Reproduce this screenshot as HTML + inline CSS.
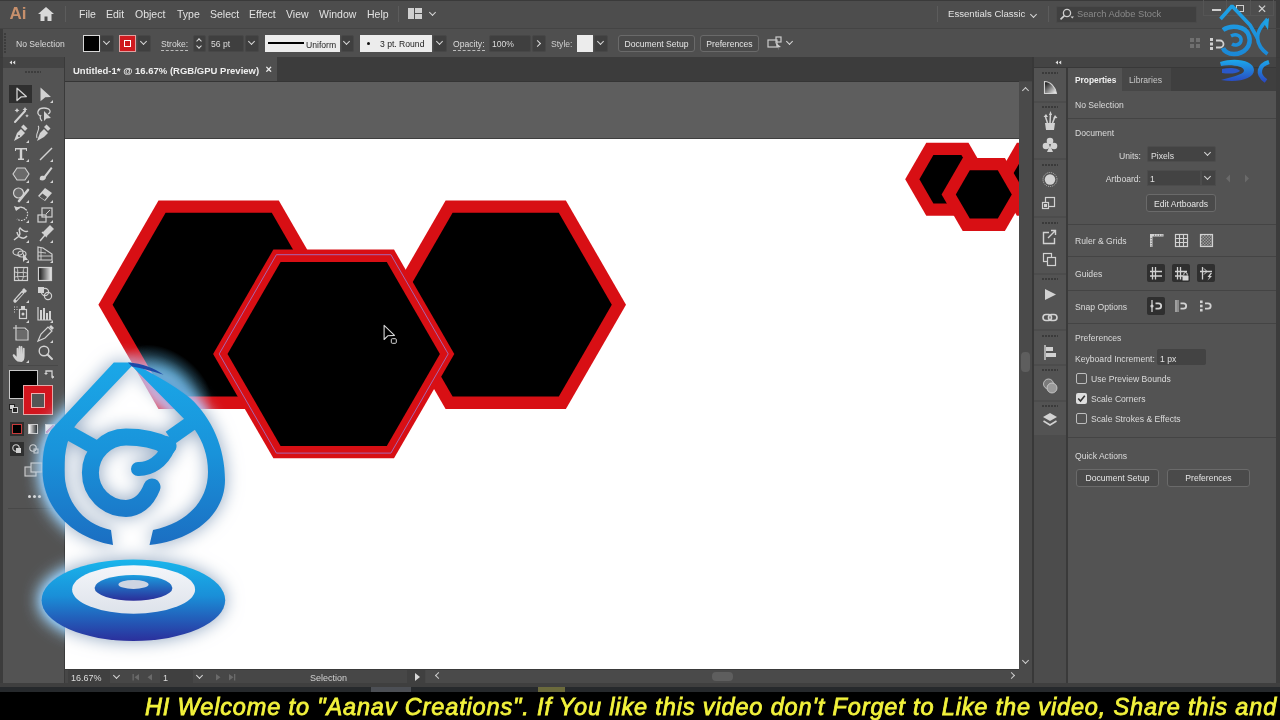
<!DOCTYPE html>
<html><head><meta charset="utf-8">
<style>
*{box-sizing:border-box;margin:0;padding:0}
html,body{width:1280px;height:720px;overflow:hidden}
body{position:relative;background:#454545;font-family:"Liberation Sans",sans-serif;color:#d6d6d6}
.a{position:absolute}
.t{position:absolute;white-space:nowrap;line-height:1}
.mi{position:absolute;top:8px;font-size:10.5px;color:#e2e2e2}
.cb{position:absolute;background:#3f3f3f;border:1px solid #474747;border-radius:2px}
.chev{position:absolute;width:6px;height:6px;border-right:1.5px solid #d8d8d8;border-bottom:1.5px solid #d8d8d8;transform:rotate(45deg)}
.btn{position:absolute;border:1px solid #6a6a6a;border-radius:3px;background:#4a4a4a;font-size:8.6px;color:#e6e6e6;text-align:center}
.pl{position:absolute;font-size:8.6px;color:#dcdcdc;white-space:nowrap;line-height:1;margin-top:0.5px;margin-left:-1px}
.sep{position:absolute;height:1px;background:#444}
</style></head><body>

<!-- MENU BAR -->
<div class="a" style="left:0;top:0;width:1280px;height:28px;background:#4d4d4d"></div>
<div class="a" style="left:0;top:0;width:1280px;height:1px;background:#3a3a3a"></div>
<div class="t" style="left:9.5px;top:5px;font-size:17px;color:#c8906c;font-weight:bold">Ai</div>
<svg class="a" style="left:38px;top:7px" width="16" height="14" viewBox="0 0 16 14"><path d="M8 0 L16 7 L13.5 7 L13.5 14 L9.5 14 L9.5 9.5 L6.5 9.5 L6.5 14 L2.5 14 L2.5 7 L0 7 Z" fill="#d9d9d9"/></svg>
<div class="a" style="left:65px;top:6px;width:1px;height:16px;background:#5c5c5c"></div>
<div class="mi" style="left:79px">File</div>
<div class="mi" style="left:106px">Edit</div>
<div class="mi" style="left:135px">Object</div>
<div class="mi" style="left:177px">Type</div>
<div class="mi" style="left:210px">Select</div>
<div class="mi" style="left:249px">Effect</div>
<div class="mi" style="left:286px">View</div>
<div class="mi" style="left:319px">Window</div>
<div class="mi" style="left:367px">Help</div>
<div class="a" style="left:398px;top:6px;width:1px;height:16px;background:#5c5c5c"></div>
<div class="a" style="left:408px;top:8px;width:6px;height:11px;background:#d0d0d0"></div>
<div class="a" style="left:415px;top:8px;width:7px;height:5px;background:#d0d0d0"></div>
<div class="a" style="left:415px;top:14px;width:7px;height:5px;background:#d0d0d0"></div>
<div class="chev" style="left:430px;top:10px;width:5px;height:5px"></div>
<div class="a" style="left:937px;top:6px;width:1px;height:16px;background:#5c5c5c"></div>
<div class="t" style="left:948px;top:9px;font-size:9.6px;color:#e2e2e2">Essentials Classic</div>
<div class="chev" style="left:1031px;top:12px;width:5px;height:5px"></div>
<div class="a" style="left:1048px;top:6px;width:1px;height:16px;background:#5c5c5c"></div>
<div class="a" style="left:1056px;top:6px;width:141px;height:17px;background:#404040;border:1px solid #4a4a4a;border-radius:2px"></div>
<svg class="a" style="left:1059px;top:8px" width="16" height="12" viewBox="0 0 16 12"><circle cx="8" cy="5" r="3.6" fill="none" stroke="#cfcfcf" stroke-width="1.3"/><path d="M5.4 7.6 L1.5 11.3" stroke="#cfcfcf" stroke-width="1.6"/><path d="M11.5 8.5 L15 8.5 L13.25 10.5Z" fill="#cfcfcf"/></svg>
<div class="t" style="left:1077px;top:10px;font-size:9.3px;color:#8a8a8a">Search Adobe Stock</div>
<!-- window buttons -->
<div class="a" style="left:1203px;top:0;width:24px;height:16px;border:1px solid #555;border-top:none"></div>
<div class="a" style="left:1227px;top:0;width:24px;height:16px;border:1px solid #555;border-top:none;border-left:none"></div>
<div class="a" style="left:1251px;top:0;width:23px;height:16px;border:1px solid #555;border-top:none;border-left:none"></div>
<div class="a" style="left:1212px;top:9px;width:9px;height:2px;background:#cfcfcf"></div>
<div class="a" style="left:1236px;top:5px;width:8px;height:7px;border:1.5px solid #cfcfcf"></div>
<div class="t" style="left:1257px;top:3px;font-size:12px;color:#cfcfcf">✕</div>
<div class="a" style="left:1276px;top:0;width:4px;height:720px;background:#3c3c3c"></div>

<!-- CONTROL BAR -->
<div class="a" style="left:0;top:28px;width:1280px;height:1px;background:#444444"></div>
<div class="a" style="left:3px;top:29px;width:1273px;height:28px;background:#4f4f4f"></div>
<div class="a" style="left:0;top:29px;width:3px;height:691px;background:#3c3c3c"></div>
<div class="t" style="left:16px;top:40px;font-size:8.6px;color:#dcdcdc">No Selection</div>
<div class="a" style="left:83px;top:35px;width:17px;height:17px;background:#000;border:1px solid #d8d8d8"></div>
<div class="cb" style="left:100px;top:35px;width:14px;height:17px"></div>
<div class="chev" style="left:104px;top:39px;width:5px;height:5px"></div>
<div class="a" style="left:119px;top:35px;width:17px;height:17px;background:#cf1a1f;border:1px solid #e0a0a0"></div>
<div class="a" style="left:124px;top:40px;width:7px;height:7px;background:#cf1a1f;border:1.5px solid #fff"></div>
<div class="cb" style="left:137px;top:35px;width:14px;height:17px"></div>
<div class="chev" style="left:141px;top:39px;width:5px;height:5px"></div>
<div class="t" style="left:161px;top:40px;font-size:8.6px;color:#dcdcdc;border-bottom:1px dashed #bbb;padding-bottom:1px">Stroke:</div>
<div class="cb" style="left:193px;top:35px;width:13px;height:17px"></div>
<div class="a" style="left:197px;top:39px;width:4px;height:4px;border-left:1.2px solid #ddd;border-top:1.2px solid #ddd;transform:rotate(45deg)"></div>
<div class="a" style="left:197px;top:44px;width:4px;height:4px;border-right:1.2px solid #ddd;border-bottom:1.2px solid #ddd;transform:rotate(45deg)"></div>
<div class="cb" style="left:208px;top:35px;width:36px;height:17px"></div>
<div class="t" style="left:211px;top:40px;font-size:8.6px;color:#dcdcdc">56 pt</div>
<div class="cb" style="left:245px;top:35px;width:14px;height:17px"></div>
<div class="chev" style="left:249px;top:39px;width:5px;height:5px"></div>
<div class="a" style="left:265px;top:35px;width:75px;height:17px;background:#ececec"></div>
<div class="a" style="left:268px;top:42px;width:36px;height:2px;background:#000"></div>
<div class="t" style="left:306px;top:41px;font-size:8.6px;color:#222">Uniform</div>
<div class="cb" style="left:341px;top:35px;width:13px;height:17px"></div>
<div class="chev" style="left:344px;top:39px;width:5px;height:5px"></div>
<div class="a" style="left:360px;top:35px;width:72px;height:17px;background:#ececec"></div>
<div class="a" style="left:367px;top:42px;width:3px;height:3px;background:#111;border-radius:50%"></div>
<div class="t" style="left:380px;top:40px;font-size:8.6px;color:#222">3 pt. Round</div>
<div class="cb" style="left:433px;top:35px;width:14px;height:17px"></div>
<div class="chev" style="left:437px;top:39px;width:5px;height:5px"></div>
<div class="t" style="left:453px;top:40px;font-size:8.6px;color:#dcdcdc;border-bottom:1px dashed #bbb;padding-bottom:1px">Opacity:</div>
<div class="cb" style="left:489px;top:35px;width:42px;height:17px"></div>
<div class="t" style="left:492px;top:40px;font-size:8.6px;color:#dcdcdc">100%</div>
<div class="cb" style="left:532px;top:35px;width:14px;height:17px"></div>
<div class="a" style="left:535px;top:41px;width:5px;height:5px;border-right:1.5px solid #ddd;border-top:1.5px solid #ddd;transform:rotate(45deg)"></div>
<div class="t" style="left:551px;top:40px;font-size:8.6px;color:#cfcfcf">Style:</div>
<div class="a" style="left:577px;top:35px;width:16px;height:17px;background:#ececec"></div>
<div class="cb" style="left:594px;top:35px;width:14px;height:17px"></div>
<div class="chev" style="left:598px;top:39px;width:5px;height:5px"></div>
<div class="btn" style="left:618px;top:35px;width:77px;height:17px;line-height:17px">Document Setup</div>
<div class="btn" style="left:700px;top:35px;width:59px;height:17px;line-height:17px">Preferences</div>
<svg class="a" style="left:767px;top:36px" width="16" height="15" viewBox="0 0 16 15"><rect x="1" y="4" width="9" height="7" fill="none" stroke="#ccc" stroke-width="1.2"/><rect x="9" y="1" width="5" height="5" fill="none" stroke="#ccc" stroke-width="1.2"/><path d="M8 6 L14 11 L11 11.5 L12 14.5 Z" fill="#ccc"/></svg>
<div class="chev" style="left:787px;top:39px;width:5px;height:5px"></div>
<div class="a" style="left:1190px;top:38px;width:4px;height:4px;background:#707070"></div>
<div class="a" style="left:1196px;top:38px;width:4px;height:4px;background:#707070"></div>
<div class="a" style="left:1190px;top:44px;width:4px;height:4px;background:#707070"></div>
<div class="a" style="left:1196px;top:44px;width:4px;height:4px;background:#707070"></div>
<svg class="a" style="left:1208px;top:36px" width="20" height="16" viewBox="0 0 20 16"><rect x="2" y="2" width="3" height="3" fill="#d0d0d0"/><rect x="2" y="6.5" width="3" height="3" fill="#d0d0d0"/><rect x="2" y="11" width="3" height="3" fill="#d0d0d0"/><path d="M8 4.5 L12 4.5 A3.5 3.5 0 0 1 12 11.5 L8 11.5" fill="none" stroke="#d0d0d0" stroke-width="1.8"/></svg>
<div class="a" style="left:4px;top:33px;width:2px;height:20px;background:repeating-linear-gradient(180deg,#3c3c3c 0 2px,transparent 2px 3px)"></div>
<div class="a" style="left:0;top:57px;width:1280px;height:1px;background:#3a3a3a"></div>

<!-- TOOLBAR -->
<div class="a" style="left:3px;top:57px;width:61px;height:626px;background:#535353"></div>
<div class="a" style="left:3px;top:57px;width:61px;height:11px;background:#444444"></div>
<svg class="a" style="left:9px;top:60px" width="7" height="5" viewBox="0 0 7 5"><path d="M3 0.5 L0.5 2.5 L3 4.5Z M6.2 0.5 L3.7 2.5 L6.2 4.5Z" fill="#e0e0e0"/></svg>
<div class="a" style="left:25px;top:71px;width:16px;height:2px;background:repeating-linear-gradient(90deg,#3d3d3d 0 2px,transparent 2px 3px)"></div>
<div class="a" style="left:64px;top:57px;width:1px;height:626px;background:#3a3a3a"></div>
<div class="a" style="left:8px;top:365px;width:50px;height:1px;background:#484848"></div>
<div class="a" style="left:8px;top:508px;width:50px;height:1px;background:#484848"></div>
<svg class="a" style="left:0;top:0" width="65" height="683" viewBox="0 0 65 683"><rect x="9" y="85" width="23" height="18" fill="#2f2f2f"/><path d="M17 88.2 L26.3 96.6 L21.3 96.8 L17 100.6 Z" fill="#2f2f2f" stroke="#d2d2d2" stroke-width="1.3" stroke-linejoin="round"/><path d="M40.5 87.5 L51 97 L45.3 97.2 L40.5 101.2 Z" fill="#d2d2d2"/><path d="M53 100 L53 103 L50 103Z" fill="#d2d2d2"/><path d="M15 122 L25 111" stroke="#d2d2d2" stroke-width="2" stroke-linecap="round"/><path d="M17 108 l0.8 1.6 l1.6 0.8 l-1.6 0.8 l-0.8 1.6 l-0.8 -1.6 l-1.6 -0.8 l1.6 -0.8z M25 107 l0.8 1.6 l1.6 0.8 l-1.6 0.8 l-0.8 1.6 l-0.8 -1.6 l-1.6 -0.8 l1.6 -0.8z M27 114 l0.6 1.2 l1.2 0.6 l-1.2 0.6 l-0.6 1.2 l-0.6 -1.2 l-1.2 -0.6 l1.2 -0.6z" fill="#d2d2d2"/><path d="M40 116 C36 113 38 108 44 108 C50 108 52 112 48 114" fill="none" stroke="#d2d2d2" stroke-width="1.3"/><path d="M41 115 C39 118 41 120 42 121" fill="none" stroke="#d2d2d2" stroke-width="1.2"/><path d="M44 111 L44 121 L46.5 118.5 L51 118 Z" fill="#d2d2d2"/><path d="M14 141 L17 133 L21 129 L25 133 L21 137 L14 141 Z" fill="#d2d2d2"/><path d="M21 127 L23.5 124.5 L27.5 128.5 L25 131Z" fill="#d2d2d2"/><circle cx="19" cy="136" r="1" fill="#535353"/><path d="M29 140 L29 143 L26 143Z" fill="#d2d2d2"/><path d="M37 141 L40 133 L44 129 L48 133 L44 137 L37 141 Z" fill="#d2d2d2"/><path d="M44 127 L46.5 124.5 L50.5 128.5 L48 131Z" fill="#d2d2d2"/><path d="M38 126 C41 128 35 134 37 138" fill="none" stroke="#d2d2d2" stroke-width="1.1"/><path d="M15 148 L27 148 L27 151 L26 151 L26 149.5 L22.2 149.5 L22.2 158.5 L24 158.5 L24 160 L18 160 L18 158.5 L19.8 158.5 L19.8 149.5 L16 149.5 L16 151 L15 151Z" fill="#d2d2d2"/><path d="M29 159 L29 162 L26 162Z" fill="#d2d2d2"/><path d="M40 160 L52 148" stroke="#d2d2d2" stroke-width="1.4"/><path d="M53 159 L53 162 L50 162Z" fill="#d2d2d2"/><path d="M17 168 L25 168 L29 174 L25 180 L17 180 L13 174Z" fill="#6a6a6a" stroke="#d2d2d2" stroke-width="1.1"/><path d="M29 180 L29 183 L26 183Z" fill="#d2d2d2"/><path d="M40 180 C39 176 42 175 44 176 L51 167 L52.5 168.3 L46 177 C46 180 43 181 40 180Z" fill="#d2d2d2"/><path d="M53 180 L53 183 L50 183Z" fill="#d2d2d2"/><circle cx="18.5" cy="193" r="5" fill="#6a6a6a" stroke="#d2d2d2" stroke-width="1.2"/><path d="M19 201 L28 190" stroke="#d2d2d2" stroke-width="2.6" stroke-linecap="round"/><path d="M29 200 L29 203 L26 203Z" fill="#d2d2d2"/><path d="M38 196 L45 188 L52 193 L45 201 Z" fill="#d2d2d2"/><path d="M39.5 196.5 L42.5 193.5 L47 197 L44.5 200Z" fill="#535353"/><path d="M53 200 L53 203 L50 203Z" fill="#d2d2d2"/><path d="M16 210 A6.5 6.5 0 1 1 17 219" fill="none" stroke="#d2d2d2" stroke-width="1.2" stroke-dasharray="1.5 1.2"/><path d="M14 206 L16 211 L20 208 Z" fill="#d2d2d2"/><path d="M16 209 A6.5 6.5 0 0 1 26 210" fill="none" stroke="#d2d2d2" stroke-width="1.3"/><path d="M29 220 L29 223 L26 223Z" fill="#d2d2d2"/><rect x="38" y="215" width="8" height="7" fill="none" stroke="#d2d2d2" stroke-width="1.2"/><rect x="42" y="208" width="10" height="9" fill="none" stroke="#d2d2d2" stroke-width="1.2"/><path d="M46 214 L50 210" stroke="#d2d2d2" stroke-width="1"/><path d="M53 220 L53 223 L50 223Z" fill="#d2d2d2"/><path d="M14 240 L19 236 C22 232 17 230 20 228 C22 230 25 233 28 231 M17 232 C18 238 24 240 27 236" fill="none" stroke="#d2d2d2" stroke-width="1.5"/><path d="M29 240 L29 243 L26 243Z" fill="#d2d2d2"/><path d="M40 241 L45 235" stroke="#d2d2d2" stroke-width="1.4"/><path d="M43 233 L48 228 L50 226 L53 229 L51 231 L46 236 Z M42 232 L47 237" fill="#d2d2d2" stroke="#d2d2d2" stroke-width="1.4"/><path d="M53 240 L53 243 L50 243Z" fill="#d2d2d2"/><ellipse cx="18" cy="252" rx="5" ry="3.3" fill="none" stroke="#d2d2d2" stroke-width="1.2"/><ellipse cx="22" cy="254" rx="4" ry="3" fill="none" stroke="#d2d2d2" stroke-width="1.1"/><path d="M23 253 L23 262 L25 260 L28 260 Z" fill="#d2d2d2"/><path d="M29 260 L29 263 L26 263Z" fill="#d2d2d2"/><path d="M38 247 L43 248 L52 254 L52 260 L38 260 Z" fill="none" stroke="#d2d2d2" stroke-width="1.2"/><path d="M41 248 L41 260 M38 252 L46 253 M38 256 L52 256" stroke="#d2d2d2" stroke-width="0.9"/><path d="M53 260 L53 263 L50 263Z" fill="#d2d2d2"/><rect x="14.5" y="267.5" width="13" height="13" fill="none" stroke="#d2d2d2" stroke-width="1.2"/><path d="M17 268 C19 272 16 276 19 280 M24 268 C22 272 25 276 22 280 M15 272 C19 274 23 271 27 273 M15 277 C19 275 23 278 27 276" fill="none" stroke="#d2d2d2" stroke-width="0.9"/><defs><linearGradient id="gt" x1="0" x2="1"><stop offset="0" stop-color="#111"/><stop offset="1" stop-color="#eee"/></linearGradient></defs><rect x="38.5" y="267.5" width="13" height="13" fill="url(#gt)" stroke="#d2d2d2" stroke-width="1.2"/><path d="M15 301 L23 292" stroke="#d2d2d2" stroke-width="3.4" stroke-linecap="round"/><path d="M16 300 L22.5 293" stroke="#535353" stroke-width="1.2"/><path d="M22 290 L24 288 L27 291 L25 293Z" fill="#d2d2d2"/><path d="M29 300 L29 303 L26 303Z" fill="#d2d2d2"/><rect x="38" y="287" width="6" height="6" fill="#d2d2d2"/><circle cx="45" cy="292" r="3.6" fill="none" stroke="#d2d2d2" stroke-width="1.2"/><circle cx="48" cy="296" r="3.6" fill="none" stroke="#d2d2d2" stroke-width="1.2"/><path d="M14 307 h1 M16.5 307 h1 M14 309.5 h1 M16.5 309.5 h1 M14 312 h1" stroke="#d2d2d2" stroke-width="1.2"/><rect x="19.5" y="309.5" width="7" height="9" fill="none" stroke="#d2d2d2" stroke-width="1.2"/><rect x="21" y="306" width="4" height="3" fill="#d2d2d2"/><circle cx="23" cy="314" r="1.5" fill="#d2d2d2"/><path d="M29 320 L29 323 L26 323Z" fill="#d2d2d2"/><path d="M38 307 L38 320 L52 320" fill="none" stroke="#d2d2d2" stroke-width="1.2"/><path d="M41 320 L41 310 M44 320 L44 308 M47 320 L47 313 M50 320 L50 311" stroke="#d2d2d2" stroke-width="2"/><path d="M53 320 L53 323 L50 323Z" fill="#d2d2d2"/><path d="M16 325 L16 340 L28 340 L28 331 L25 328 L16 328 M13 328 L19 328" fill="none" stroke="#d2d2d2" stroke-width="1.2"/><rect x="17" y="330" width="10" height="9" fill="#6a6a6a"/><path d="M38 341 L41 334 L48 327 L52 331 L45 338 Z" fill="none" stroke="#d2d2d2" stroke-width="1.2"/><path d="M49 327 L51 325 L54 328 L52 330Z" fill="#d2d2d2"/><path d="M53 340 L53 343 L50 343Z" fill="#d2d2d2"/><path d="M17.5 361.5 C15.5 360 13.5 357.5 12.8 355.8 C12.3 354.6 13.6 353.8 14.5 354.6 L16.6 356.8 L16.6 348.6 C16.6 347.4 18.4 347.4 18.4 348.6 L18.4 354 L18.6 346.6 C18.6 345.4 20.4 345.4 20.4 346.6 L20.4 354 L20.6 347 C20.6 345.8 22.4 345.8 22.4 347 L22.4 354.2 L22.8 348.6 C22.8 347.4 24.6 347.4 24.6 348.6 L24.6 356 C24.6 359.5 23.4 361.5 21.6 362 Z" fill="#d2d2d2"/><path d="M29 360 L29 363 L26 363Z" fill="#d2d2d2"/><circle cx="44" cy="351" r="4.8" fill="none" stroke="#d2d2d2" stroke-width="1.4"/><path d="M47.5 354.5 L52 359" stroke="#d2d2d2" stroke-width="2" stroke-linecap="round"/></svg>
<!-- fill/stroke -->
<div class="a" style="left:9px;top:370px;width:29px;height:29px;background:#000;border:1px solid #c8c8c8"></div>
<div class="a" style="left:23px;top:385px;width:30px;height:30px;background:#d2151d;border:1px solid #e2a8a8"></div>
<div class="a" style="left:31px;top:393px;width:14px;height:15px;background:#555;border:1.5px solid #f0b0b0"></div>
<svg class="a" style="left:44px;top:369px" width="12" height="12" viewBox="0 0 12 12"><path d="M2 4 L2 2 L8 2 L8 8 L10 8" fill="none" stroke="#d0d0d0" stroke-width="1.3"/><path d="M0 4 L4 4 L2 6Z M8 10 L8 6 L10 8Z" fill="#d0d0d0"/></svg>
<div class="a" style="left:9px;top:404px;width:6px;height:6px;background:#d0d0d0;border:1px solid #222"></div>
<div class="a" style="left:12px;top:407px;width:6px;height:6px;background:#222;border:1px solid #d0d0d0"></div>
<div class="a" style="left:10px;top:422px;width:14px;height:14px;background:#2f2f2f"></div>
<div class="a" style="left:12px;top:424px;width:10px;height:10px;background:#000;border:1.2px solid #c83a3a"></div>
<div class="a" style="left:28px;top:424px;width:10px;height:10px;background:linear-gradient(90deg,#fff,#222);border:1px solid #ccc"></div>
<div class="a" style="left:45px;top:424px;width:10px;height:10px;background:linear-gradient(135deg,#fff 0 40%,#d04080 40% 60%,#fff 60%);border:1px solid #ccc"></div>
<div class="a" style="left:10px;top:442px;width:14px;height:14px;background:#2f2f2f"></div>
<svg class="a" style="left:10px;top:442px" width="40" height="14" viewBox="0 0 40 14"><circle cx="6" cy="6" r="3.2" fill="none" stroke="#d0d0d0" stroke-width="1.1"/><rect x="6" y="6" width="5" height="5" fill="#d0d0d0"/><circle cx="23" cy="6" r="3.2" fill="none" stroke="#d0d0d0" stroke-width="1.1"/><rect x="24" y="7" width="4" height="4" fill="none" stroke="#d0d0d0" stroke-width="1"/></svg>
<svg class="a" style="left:24px;top:462px" width="20" height="16" viewBox="0 0 20 16"><rect x="1" y="5" width="11" height="9" fill="#6a6a6a" stroke="#d0d0d0" stroke-width="1.1"/><rect x="7" y="1" width="11" height="9" fill="#6a6a6a" stroke="#d0d0d0" stroke-width="1.1"/></svg>
<div class="a" style="left:28px;top:495px;width:3px;height:3px;background:#d8d8d8;border-radius:50%;box-shadow:5px 0 #d8d8d8,10px 0 #d8d8d8"></div>
<!-- RIGHT DOCK -->
<div class="a" style="left:1034px;top:57px;width:242px;height:626px;background:#3e3e3e"></div>
<div class="a" style="left:1034px;top:57px;width:242px;height:10px;background:#444444"></div><div class="a" style="left:1034px;top:67px;width:242px;height:1px;background:#383838"></div>
<svg class="a" style="left:1055px;top:60px" width="7" height="5" viewBox="0 0 7 5"><path d="M3 0.5 L0.5 2.5 L3 4.5Z M6.2 0.5 L3.7 2.5 L6.2 4.5Z" fill="#e0e0e0"/></svg>
<div class="a" style="left:1034px;top:68px;width:32px;height:615px;background:#4c4c4c"></div>
<div class="a" style="left:1034px;top:68px;width:32px;height:33px;background:#535353"></div>
<div class="a" style="left:1034px;top:103px;width:32px;height:55px;background:#535353"></div>
<div class="a" style="left:1034px;top:160px;width:32px;height:56px;background:#535353"></div>
<div class="a" style="left:1034px;top:218px;width:32px;height:55px;background:#535353"></div>
<div class="a" style="left:1034px;top:275px;width:32px;height:54px;background:#535353"></div>
<div class="a" style="left:1034px;top:331px;width:32px;height:33px;background:#535353"></div>
<div class="a" style="left:1034px;top:366px;width:32px;height:34px;background:#535353"></div>
<div class="a" style="left:1034px;top:402px;width:32px;height:33px;background:#535353"></div>
<div class="a" style="left:1042px;top:72px;width:16px;height:2px;background:repeating-linear-gradient(90deg,#3a3a3a 0 2px,transparent 2px 3px)"></div><div class="a" style="left:1042px;top:106px;width:16px;height:2px;background:repeating-linear-gradient(90deg,#3a3a3a 0 2px,transparent 2px 3px)"></div><div class="a" style="left:1042px;top:164px;width:16px;height:2px;background:repeating-linear-gradient(90deg,#3a3a3a 0 2px,transparent 2px 3px)"></div><div class="a" style="left:1042px;top:222px;width:16px;height:2px;background:repeating-linear-gradient(90deg,#3a3a3a 0 2px,transparent 2px 3px)"></div><div class="a" style="left:1042px;top:278px;width:16px;height:2px;background:repeating-linear-gradient(90deg,#3a3a3a 0 2px,transparent 2px 3px)"></div><div class="a" style="left:1042px;top:335px;width:16px;height:2px;background:repeating-linear-gradient(90deg,#3a3a3a 0 2px,transparent 2px 3px)"></div><div class="a" style="left:1042px;top:369px;width:16px;height:2px;background:repeating-linear-gradient(90deg,#3a3a3a 0 2px,transparent 2px 3px)"></div><div class="a" style="left:1042px;top:405px;width:16px;height:2px;background:repeating-linear-gradient(90deg,#3a3a3a 0 2px,transparent 2px 3px)"></div>
<div class="a" style="left:1066px;top:68px;width:2px;height:615px;background:#3a3a3a"></div>
<!-- properties panel -->
<div class="a" style="left:1068px;top:68px;width:208px;height:615px;background:#535353"></div>
<div class="a" style="left:1068px;top:68px;width:208px;height:23px;background:#3f3f3f"></div>
<div class="a" style="left:1068px;top:68px;width:54px;height:23px;background:#535353"></div>
<div class="a" style="left:1122px;top:68px;width:49px;height:23px;background:#474747"></div>
<div class="t" style="left:1075px;top:76px;font-size:8.4px;font-weight:bold;color:#f0f0f0">Properties</div>
<div class="t" style="left:1129px;top:76px;font-size:8.6px;color:#c8c8c8">Libraries</div>
<div class="pl" style="left:1076px;top:100px">No Selection</div>
<div class="sep" style="left:1068px;top:118px;width:208px"></div>
<div class="pl" style="left:1076px;top:128px">Document</div>
<div class="pl" style="left:1142px;top:151px;transform:translateX(-100%)">Units:</div>
<div class="a" style="left:1147px;top:146px;width:69px;height:16px;background:#434343;border:1px solid #4c4c4c;border-radius:2px"></div>
<div class="pl" style="left:1152px;top:151px;color:#e0e0e0">Pixels</div>
<div class="chev" style="left:1205px;top:150px;width:5px;height:5px"></div>
<div class="pl" style="left:1142px;top:174px;transform:translateX(-100%)">Artboard:</div>
<div class="a" style="left:1147px;top:170px;width:54px;height:16px;background:#434343;border:1px solid #4c4c4c"></div>
<div class="a" style="left:1201px;top:170px;width:15px;height:16px;background:#434343;border:1px solid #4c4c4c"></div>
<div class="pl" style="left:1151px;top:174px;color:#e0e0e0">1</div>
<div class="chev" style="left:1205px;top:174px;width:5px;height:5px"></div>
<svg class="a" style="left:1225px;top:174px" width="30" height="9" viewBox="0 0 30 9"><path d="M5 0.5 L1 4.5 L5 8.5Z M20 0.5 L24 4.5 L20 8.5Z" fill="#6a6a6a"/></svg>
<div class="btn" style="left:1146px;top:194px;width:70px;height:18px;line-height:18px">Edit Artboards</div>
<div class="sep" style="left:1068px;top:224px;width:208px"></div>
<div class="pl" style="left:1076px;top:236px">Ruler &amp; Grids</div>
<svg class="a" style="left:1148px;top:232px" width="70" height="16" viewBox="0 0 70 16">
<path d="M2 2 L15.5 2 L15.5 4.5 L4.5 4.5 L4.5 15 L2 15 Z" fill="#d2d2d2"/><path d="M6 3.2 h1 M8.5 3.2 h1 M11 3.2 h1 M13.5 3.2 h1 M3.2 6 v1 M3.2 8.5 v1 M3.2 11 v1 M3.2 13.5 v1" stroke="#555" stroke-width="0.9"/>
<rect x="27.5" y="2.5" width="12" height="12" fill="none" stroke="#d2d2d2" stroke-width="1.2"/><path d="M31.5 2.5 L31.5 14.5 M35.5 2.5 L35.5 14.5 M27.5 6.5 L39.5 6.5 M27.5 10.5 L39.5 10.5" stroke="#d2d2d2" stroke-width="1.1"/>
<defs><pattern id="chk" x="53" y="3" width="3" height="3" patternUnits="userSpaceOnUse"><rect width="3" height="3" fill="#5a5a5a"/><rect width="1.5" height="1.5" fill="#9a9a9a"/><rect x="1.5" y="1.5" width="1.5" height="1.5" fill="#9a9a9a"/></pattern></defs>
<rect x="52.5" y="2.5" width="12" height="12" fill="url(#chk)" stroke="#d2d2d2" stroke-width="1.2"/>
</svg>
<div class="sep" style="left:1068px;top:256px;width:208px"></div>
<div class="pl" style="left:1076px;top:269px">Guides</div>
<div class="a" style="left:1147px;top:264px;width:18px;height:18px;background:#2f2f2f;border-radius:2px"></div>
<div class="a" style="left:1172px;top:264px;width:18px;height:18px;background:#2f2f2f;border-radius:2px"></div>
<div class="a" style="left:1197px;top:264px;width:18px;height:18px;background:#2f2f2f;border-radius:2px"></div>
<svg class="a" style="left:1147px;top:264px" width="70" height="18" viewBox="0 0 70 18">
<path d="M5.5 3 L5.5 15.5 M8.5 3 L8.5 15.5 M3 7.5 L15 7.5 M3 12 L15 12" stroke="#d2d2d2" stroke-width="1.3"/>
<path d="M30.5 3 L30.5 15.5 M33.5 3 L33.5 15.5 M28 7.5 L40 7.5 M28 12 L36 12" stroke="#d2d2d2" stroke-width="1.3"/><rect x="35.5" y="11.5" width="6" height="5" rx="0.5" fill="#d2d2d2"/><path d="M36.8 11.5 v-1.3 a1.7 1.7 0 0 1 3.4 0 v1.3" fill="none" stroke="#d2d2d2" stroke-width="1"/>
<path d="M55.5 3 L55.5 15.5 M53 7.5 L65 7.5" stroke="#d2d2d2" stroke-width="1.3"/><path d="M57 4.5 L60 7.5 M57 10.5 L60 7.5" stroke="#d2d2d2" stroke-width="1"/><path d="M63.5 9 L60.5 13 L62.5 13 L60.5 16.5 L65 12 L63 12 L65 9Z" fill="#d2d2d2"/>
</svg>
<div class="sep" style="left:1068px;top:290px;width:208px"></div>
<div class="pl" style="left:1076px;top:302px">Snap Options</div>
<div class="a" style="left:1147px;top:297px;width:18px;height:18px;background:#2f2f2f;border-radius:2px"></div>
<svg class="a" style="left:1147px;top:297px" width="70" height="18" viewBox="0 0 70 18">
<path d="M5 3 L5 15" stroke="#d2d2d2" stroke-width="1.3"/><circle cx="5" cy="9" r="1.6" fill="#d2d2d2"/><path d="M8.5 6.3 L11.5 6.3 A2.7 2.7 0 0 1 11.5 11.7 L8.5 11.7" fill="none" stroke="#d2d2d2" stroke-width="1.8"/>
<path d="M29 3 L29 15" stroke="#d2d2d2" stroke-width="1.2"/><path d="M30 4 h2 M30 6 h2 M30 8 h2 M30 10 h2 M30 12 h2 M30 14 h2" stroke="#d2d2d2" stroke-width="0.9"/><path d="M33.5 6.3 L36.5 6.3 A2.7 2.7 0 0 1 36.5 11.7 L33.5 11.7" fill="none" stroke="#d2d2d2" stroke-width="1.8"/>
<rect x="53" y="3.5" width="2.6" height="2.6" fill="#d2d2d2"/><rect x="53" y="7.7" width="2.6" height="2.6" fill="#d2d2d2"/><rect x="53" y="11.9" width="2.6" height="2.6" fill="#d2d2d2"/><path d="M58 6.3 L61 6.3 A2.7 2.7 0 0 1 61 11.7 L58 11.7" fill="none" stroke="#d2d2d2" stroke-width="1.8"/>
</svg>
<div class="sep" style="left:1068px;top:323px;width:208px"></div>
<div class="pl" style="left:1076px;top:333px">Preferences</div>
<div class="pl" style="left:1076px;top:354px">Keyboard Increment:</div>
<div class="a" style="left:1157px;top:349px;width:49px;height:16px;background:#434343;border-radius:2px"></div>
<div class="pl" style="left:1161px;top:354px;color:#e0e0e0">1 px</div>
<div class="a" style="left:1076px;top:373px;width:11px;height:11px;border:1px solid #bdbdbd;border-radius:2px"></div>
<div class="pl" style="left:1092px;top:374px">Use Preview Bounds</div>
<div class="a" style="left:1076px;top:393px;width:11px;height:11px;background:#dedede;border-radius:2px"></div>
<svg class="a" style="left:1076px;top:393px" width="11" height="11" viewBox="0 0 11 11"><path d="M2.2 5.5 L4.5 8 L8.8 2.8" fill="none" stroke="#333" stroke-width="1.6"/></svg>
<div class="pl" style="left:1092px;top:394px">Scale Corners</div>
<div class="a" style="left:1076px;top:413px;width:11px;height:11px;border:1px solid #bdbdbd;border-radius:2px"></div>
<div class="pl" style="left:1092px;top:414px">Scale Strokes &amp; Effects</div>
<div class="sep" style="left:1068px;top:437px;width:208px"></div>
<div class="pl" style="left:1076px;top:451px">Quick Actions</div>
<div class="btn" style="left:1076px;top:469px;width:83px;height:18px;line-height:16px">Document Setup</div>
<div class="btn" style="left:1167px;top:469px;width:83px;height:18px;line-height:16px">Preferences</div>
<svg class="a" style="left:0;top:0" width="1280" height="683" viewBox="0 0 1280 683" overflow="visible"><defs><linearGradient id="gq" x1="0" y1="0" x2="1" y2="1"><stop offset="0" stop-color="#000"/><stop offset="1" stop-color="#fff"/></linearGradient></defs><path d="M1044.5 81.5 C1050.5 81.5 1055.5 87 1056.5 93.5 L1044.5 93.5 Z" fill="url(#gq)" stroke="#d2d2d2" stroke-width="1.1"/><path d="M1045 123 L1055 123 L1054 130 L1046 130Z" fill="#d2d2d2"/><path d="M1047.5 123 L1045.5 117 M1050 123 L1050.5 114 M1052.5 123 L1054.5 118" stroke="#d2d2d2" stroke-width="1.5"/><path d="M1043.5 117 l2.5 -3 l2 3z M1049 115 l1.5 -4 l1.5 4z M1053 118.5 l2 -3.5 l2.5 3z" fill="#d2d2d2"/><circle cx="1050" cy="141" r="3.3" fill="#d2d2d2"/><circle cx="1046" cy="146" r="3.3" fill="#d2d2d2"/><circle cx="1054" cy="146" r="3.3" fill="#d2d2d2"/><path d="M1050 145 L1047 152 L1053 152Z" fill="#d2d2d2"/><circle cx="1050" cy="179.5" r="5.2" fill="#d2d2d2"/><circle cx="1050" cy="179.5" r="7" fill="none" stroke="#d2d2d2" stroke-width="0.8" stroke-dasharray="1 1"/><rect x="1045.5" y="197.5" width="9" height="9" fill="none" stroke="#d2d2d2" stroke-width="1.2"/><rect x="1042.5" y="202.5" width="6" height="6" fill="#535353" stroke="#d2d2d2" stroke-width="1.2"/><rect x="1044" y="204" width="3" height="3" fill="#d2d2d2"/><path d="M1049 232.5 L1043.5 232.5 L1043.5 243.5 L1054.5 243.5 L1054.5 238" fill="none" stroke="#d2d2d2" stroke-width="1.4"/><path d="M1048 238 L1055 231 M1051 230.5 L1055.5 230.5 L1055.5 235" fill="none" stroke="#d2d2d2" stroke-width="1.4"/><rect x="1043.5" y="253.5" width="8" height="8" fill="none" stroke="#d2d2d2" stroke-width="1.2"/><rect x="1047.5" y="257.5" width="8" height="8" fill="#535353" stroke="#d2d2d2" stroke-width="1.2"/><path d="M1045 289 L1056 294.5 L1045 300Z" fill="#d2d2d2"/><rect x="1043" y="314.5" width="8.5" height="6" rx="3" fill="none" stroke="#d2d2d2" stroke-width="1.6"/><rect x="1048.5" y="314.5" width="8.5" height="6" rx="3" fill="none" stroke="#d2d2d2" stroke-width="1.6"/><path d="M1045 345 L1045 360" stroke="#d2d2d2" stroke-width="1.4"/><rect x="1046" y="347" width="7" height="4" fill="#d2d2d2"/><rect x="1046" y="353" width="10" height="4" fill="#d2d2d2"/><circle cx="1048.5" cy="384" r="5" fill="#7a7a7a" stroke="#d2d2d2" stroke-width="0.8"/><circle cx="1052" cy="388" r="5" fill="#9a9a9a" stroke="#d2d2d2" stroke-width="0.8"/><path d="M1050 413 L1057 417 L1050 421 L1043 417Z" fill="#d2d2d2"/><path d="M1043.5 421 L1050 425 L1056.5 421" fill="none" stroke="#d2d2d2" stroke-width="1.6"/></svg>
<!-- CANVAS -->
<div class="a" style="left:65px;top:57px;width:967px;height:24px;background:#3c3c3c"></div>
<div class="a" style="left:65px;top:57px;width:212px;height:24px;background:#4f4f4f"></div>
<div class="t" style="left:73px;top:66px;font-size:9.5px;font-weight:bold;color:#eeeeee">Untitled-1* @ 16.67% (RGB/GPU Preview)</div>
<div class="t" style="left:265.5px;top:64px;font-size:11px;font-weight:bold;color:#eeeeee">×</div>
<div class="a" style="left:65px;top:81px;width:954px;height:1px;background:#353535"></div>
<div class="a" style="left:65px;top:82px;width:954px;height:57px;background:#5e5e5e"></div>
<div class="a" style="left:65px;top:138px;width:954px;height:1px;background:#3e3e3e"></div>
<div class="a" style="left:65px;top:139px;width:954px;height:530px;background:#ffffff"></div>
<svg class="a" style="left:0;top:0" width="1019" height="669" viewBox="0 0 1019 669"><defs><clipPath id="cv"><rect x="65" y="139" width="954" height="530"/></clipPath></defs><g clip-path="url(#cv)"><polygon points="98.4,304.7 158.5,200.5 278.8,200.5 339.0,304.7 278.8,408.9 158.5,408.9" fill="#d80f14"/><polygon points="112.6,304.7 165.6,212.8 271.8,212.8 324.8,304.7 271.8,396.6 165.6,396.6" fill="#000"/><polygon points="385.4,304.7 445.6,200.5 565.9,200.5 626.0,304.7 565.9,408.9 445.6,408.9" fill="#d80f14"/><polygon points="399.6,304.7 452.6,212.8 558.8,212.8 611.8,304.7 558.8,396.6 452.6,396.6" fill="#000"/><polygon points="213.1,353.9 273.4,249.5 394.0,249.5 454.3,353.9 394.0,458.3 273.4,458.3" fill="#d80f14"/><polygon points="219.2,353.9 276.4,254.7 390.9,254.7 448.2,353.9 390.9,453.1 276.4,453.1" fill="none" stroke="#a866b0" stroke-width="1"/><polygon points="227.5,353.9 280.6,261.9 386.8,261.9 439.9,353.9 386.8,445.9 280.6,445.9" fill="#000"/><polygon points="905.2,179.2 926.3,142.7 968.5,142.7 989.6,179.2 968.5,215.7 926.3,215.7" fill="#d80f14"/><polygon points="919.4,179.2 933.4,155.0 961.4,155.0 975.4,179.2 961.4,203.4 933.4,203.4" fill="#000"/><polygon points="995.8,179.3 1016.9,142.8 1059.1,142.8 1080.2,179.3 1059.1,215.8 1016.9,215.8" fill="#d80f14"/><polygon points="1010.0,179.3 1024.0,155.1 1052.0,155.1 1066.0,179.3 1052.0,203.5 1024.0,203.5" fill="#000"/><polygon points="941.6,194.4 962.7,157.9 1004.9,157.9 1026.0,194.4 1004.9,230.9 962.7,230.9" fill="#d80f14"/><polygon points="955.8,194.4 969.8,170.2 997.8,170.2 1011.8,194.4 997.8,218.6 969.8,218.6" fill="#000"/></g><path d="M384.1 325.4 L384.1 339.5 L387.8 335.8 L394.5 335.4 Z" fill="#000" stroke="#d8d8d8" stroke-width="1.1" stroke-linejoin="round"/><rect x="391.3" y="338.7" width="5" height="4.6" rx="1" fill="#000" stroke="#d8d8d8" stroke-width="1"/></svg>
<!-- vertical scrollbar -->
<div class="a" style="left:1019px;top:82px;width:13px;height:601px;background:#4a4a4a"></div>
<div class="a" style="left:1032px;top:57px;width:2px;height:626px;background:#383838"></div>
<div class="a" style="left:1023px;top:88px;width:5px;height:5px;border-left:1.3px solid #cfcfcf;border-top:1.3px solid #cfcfcf;transform:rotate(45deg)"></div>
<div class="a" style="left:1021px;top:352px;width:9px;height:20px;background:#5e5e5e;border-radius:4px"></div>
<div class="a" style="left:1023px;top:658px;width:5px;height:5px;border-right:1.3px solid #cfcfcf;border-bottom:1.3px solid #cfcfcf;transform:rotate(45deg)"></div>
<!-- status bar -->
<div class="a" style="left:65px;top:669px;width:954px;height:14px;background:#474747"></div>
<div class="a" style="left:65px;top:669px;width:954px;height:1px;background:#3a3a3a"></div>
<div class="a" style="left:68px;top:670px;width:42px;height:13px;background:#404040"></div>
<div class="t" style="left:71px;top:674px;font-size:9px;color:#dcdcdc">16.67%</div>
<div class="chev" style="left:114px;top:673px;width:5px;height:5px"></div>
<div class="a" style="left:160px;top:670px;width:33px;height:13px;background:#404040"></div>
<div class="t" style="left:163px;top:674px;font-size:9px;color:#dcdcdc">1</div>
<div class="chev" style="left:197px;top:673px;width:5px;height:5px"></div>
<svg class="a" style="left:130px;top:672px" width="24" height="10" viewBox="0 0 24 10"><rect x="2.5" y="2" width="1.3" height="6.5" fill="#6a6a6a"/><path d="M9 2 L4.5 5.25 L9 8.5Z M22 2 L17.5 5.25 L22 8.5Z" fill="#6a6a6a"/></svg>
<svg class="a" style="left:213px;top:672px" width="26" height="10" viewBox="0 0 26 10"><path d="M3 2 L7.5 5.25 L3 8.5Z M16 2 L20.5 5.25 L16 8.5Z" fill="#6a6a6a"/><rect x="21" y="2" width="1.3" height="6.5" fill="#6a6a6a"/></svg>
<div class="t" style="left:310px;top:674px;font-size:9px;color:#d0d0d0">Selection</div>
<div class="a" style="left:407px;top:670px;width:18px;height:13px;background:#404040"></div>
<div class="a" style="left:415px;top:673px;width:0;height:0;border-left:5px solid #d8d8d8;border-top:4px solid transparent;border-bottom:4px solid transparent"></div>
<div class="a" style="left:429px;top:674px;width:5px;height:5px;border-left:1.3px solid #cfcfcf;border-bottom:1.3px solid #cfcfcf;transform:rotate(45deg)"></div>
<div class="a" style="left:426px;top:670px;width:593px;height:13px;background:#4a4a4a"></div>
<div class="a" style="left:436px;top:673px;width:5px;height:5px;border-left:1.3px solid #cfcfcf;border-bottom:1.3px solid #cfcfcf;transform:rotate(45deg)"></div>
<div class="a" style="left:712px;top:672px;width:21px;height:9px;background:#5e5e5e;border-radius:4px"></div>
<div class="a" style="left:1009px;top:673px;width:5px;height:5px;border-right:1.3px solid #cfcfcf;border-top:1.3px solid #cfcfcf;transform:rotate(45deg)"></div>
<!-- bottom band -->
<div class="a" style="left:0;top:683px;width:1280px;height:4px;background:#3f3f3f"></div>
<div class="a" style="left:0;top:687px;width:1280px;height:5px;background:#26292c"></div>
<div class="a" style="left:371px;top:687px;width:40px;height:5px;background:#4c4f55"></div>
<div class="a" style="left:538px;top:687px;width:27px;height:5px;background:#6b6a3c"></div>
<div class="a" style="left:0;top:692px;width:1280px;height:28px;background:#000"></div>
<div class="t" id="cap" style="left:145px;top:696px;font-size:23.5px;font-weight:normal;font-style:italic;color:#f2f23c;-webkit-text-stroke:0.8px #f2f23c;letter-spacing:0.86px">HI Welcome to "Aanav Creations". If You like this video don't Forget to Like the video, Share this and</div>

<!-- LOGO OVERLAY -->
<svg class="a" style="left:0;top:0" width="0" height="0">
<defs>
<linearGradient id="dg" x1="0" y1="360" x2="0" y2="545" gradientUnits="userSpaceOnUse"><stop offset="0" stop-color="#1aa8e8"/><stop offset="0.5" stop-color="#1993da"/><stop offset="1" stop-color="#1b6ec2"/></linearGradient>
<linearGradient id="bg1" x1="0" y1="559" x2="0" y2="641" gradientUnits="userSpaceOnUse"><stop offset="0" stop-color="#19b6ec"/><stop offset="0.45" stop-color="#1a8fd8"/><stop offset="1" stop-color="#2b2f9c"/></linearGradient>
<linearGradient id="bg2" x1="0" y1="575" x2="0" y2="601" gradientUnits="userSpaceOnUse"><stop offset="0" stop-color="#1a9ee0"/><stop offset="1" stop-color="#2b2c98"/></linearGradient>
<linearGradient id="wg" x1="0" y1="565" x2="0" y2="614" gradientUnits="userSpaceOnUse"><stop offset="0" stop-color="#f4f6fa"/><stop offset="1" stop-color="#dde2ea"/></linearGradient>
<g id="lshape">
<path d="M113 545 C72 538 42.5 508 42.5 470 C42.5 452 45 440 51 430 L113.8 362.6 L131 362.6 C150 372 172 384 190 398 C212 418 225 448 225 480 C225 514 195 540 149.5 545 L153 530 C186 523 208 502 208 472 C208 455 203 442 195 430 L131.8 366 L77.5 423 C68 434 64.4 450 64.4 470 C64.4 500 82 524 111 530 Z" fill="url(#dg)"/>
<path d="M62 429 L98 449" stroke="url(#dg)" stroke-width="15"/>
<path d="M152 487 C146 502 136 508.4 126 508.4 A35.7 35.7 0 0 1 90.4 472.7 A35.7 35.7 0 0 1 126 437 C142 437 156 440 168 446" fill="none" stroke="url(#dg)" stroke-width="17" stroke-linecap="round"/>
<path d="M197 419 L170 438" fill="none" stroke="url(#dg)" stroke-width="15"/><circle cx="166" cy="446" r="10" fill="url(#dg)"/><path d="M168 448 C162 462 150 469 139 469 L138 469" fill="none" stroke="url(#dg)" stroke-width="14" stroke-linecap="round"/>
<ellipse cx="133.4" cy="600.2" rx="91.8" ry="40.8" fill="url(#bg1)"/>
</g>
<filter id="gscr" x="-40%" y="-40%" width="180%" height="180%">
<feGaussianBlur in="SourceAlpha" stdDeviation="9" result="b"/>
<feComponentTransfer in="b" result="b2"><feFuncA type="linear" slope="2.4"/></feComponentTransfer>
<feFlood flood-color="#80c4ee"/>
<feComposite in2="b2" operator="in"/>
</filter>
<filter id="gmul" x="-40%" y="-40%" width="180%" height="180%">
<feGaussianBlur in="SourceAlpha" stdDeviation="9" result="b"/>
<feComponentTransfer in="b" result="b2"><feFuncA type="linear" slope="1.15"/></feComponentTransfer>
<feFlood flood-color="#9aaec6"/>
<feComposite in2="b2" operator="in"/>
</filter>
</defs>
</svg>
<svg class="a" style="left:0;top:300px;mix-blend-mode:screen" width="300" height="380" viewBox="0 300 300 380"><defs><radialGradient id="rgl" cx="0.5" cy="0.5" r="0.5"><stop offset="0" stop-color="#9ad0ee"/><stop offset="0.4" stop-color="#4e8eb0"/><stop offset="0.75" stop-color="#18303c"/><stop offset="1" stop-color="#000"/></radialGradient></defs><ellipse cx="166" cy="386" rx="52" ry="34" fill="url(#rgl)" transform="rotate(37 166 386)"/><use href="#lshape" filter="url(#gscr)"/></svg>
<svg class="a" style="left:0;top:300px;mix-blend-mode:multiply" width="300" height="380" viewBox="0 300 300 380"><use href="#lshape" filter="url(#gmul)"/></svg>
<svg class="a" style="left:0;top:300px" width="300" height="380" viewBox="0 300 300 380">
<use href="#lshape"/>
<path d="M128 362.4 C142 363 155 368 163.5 374.8 C153 371.5 142 368 132 366.5Z" fill="#1e4aa8"/>
<ellipse cx="133.6" cy="589.5" rx="61.5" ry="24.2" fill="url(#wg)"/>
<ellipse cx="133.5" cy="587.9" rx="38.9" ry="12.9" fill="url(#bg2)"/>
<ellipse cx="133.5" cy="584.4" rx="15" ry="4.5" fill="#cdd5e2"/>
</svg>
<!-- small logo top right -->
<svg class="a" style="left:1210px;top:0" width="70" height="85" viewBox="1210 0 70 85">
<defs><linearGradient id="sl" x1="0" y1="58" x2="0" y2="82" gradientUnits="userSpaceOnUse"><stop offset="0" stop-color="#1ab0ee"/><stop offset="1" stop-color="#2a48c0"/></linearGradient>
<linearGradient id="sl2" x1="0" y1="5" x2="0" y2="56" gradientUnits="userSpaceOnUse"><stop offset="0" stop-color="#1ea2e6"/><stop offset="1" stop-color="#1b88d6"/></linearGradient></defs>
<path d="M1220.5 19 L1232 6 L1250 25 L1258 39" fill="none" stroke="url(#sl2)" stroke-width="3.6" stroke-linejoin="bevel"/>
<path d="M1223 30 C1230 25 1246 25 1249 36 C1252 46 1244 54 1234 54 C1228 54 1224 51 1223 48" fill="none" stroke="url(#sl2)" stroke-width="4.6"/>
<path d="M1231 36 C1236 33 1242 36 1241 41 C1240 45 1235 46 1232 44" fill="none" stroke="url(#sl2)" stroke-width="3.4"/>
<path d="M1267.5 19 C1261 26 1257 32 1257.5 38 C1258 45 1262 50 1267.5 54" fill="none" stroke="url(#sl2)" stroke-width="3.6"/>
<path d="M1263 22 L1269 18 L1268 30Z" fill="#1ea2e6"/>
<path d="M1220 62 C1236 57 1254 61 1254 70 C1254 79 1238 83 1221 80 C1230 77 1243 75 1244 71 C1245 66 1230 64 1221 66Z" fill="url(#sl)"/>
<path d="M1222 69 C1230 67 1238 68 1240 71 C1236 74 1229 74 1222 73Z" fill="#2a58c8"/>
<path d="M1269 62 C1259 65 1256 74 1266 81" fill="none" stroke="url(#sl)" stroke-width="4.4"/>
</svg>
</body></html>
